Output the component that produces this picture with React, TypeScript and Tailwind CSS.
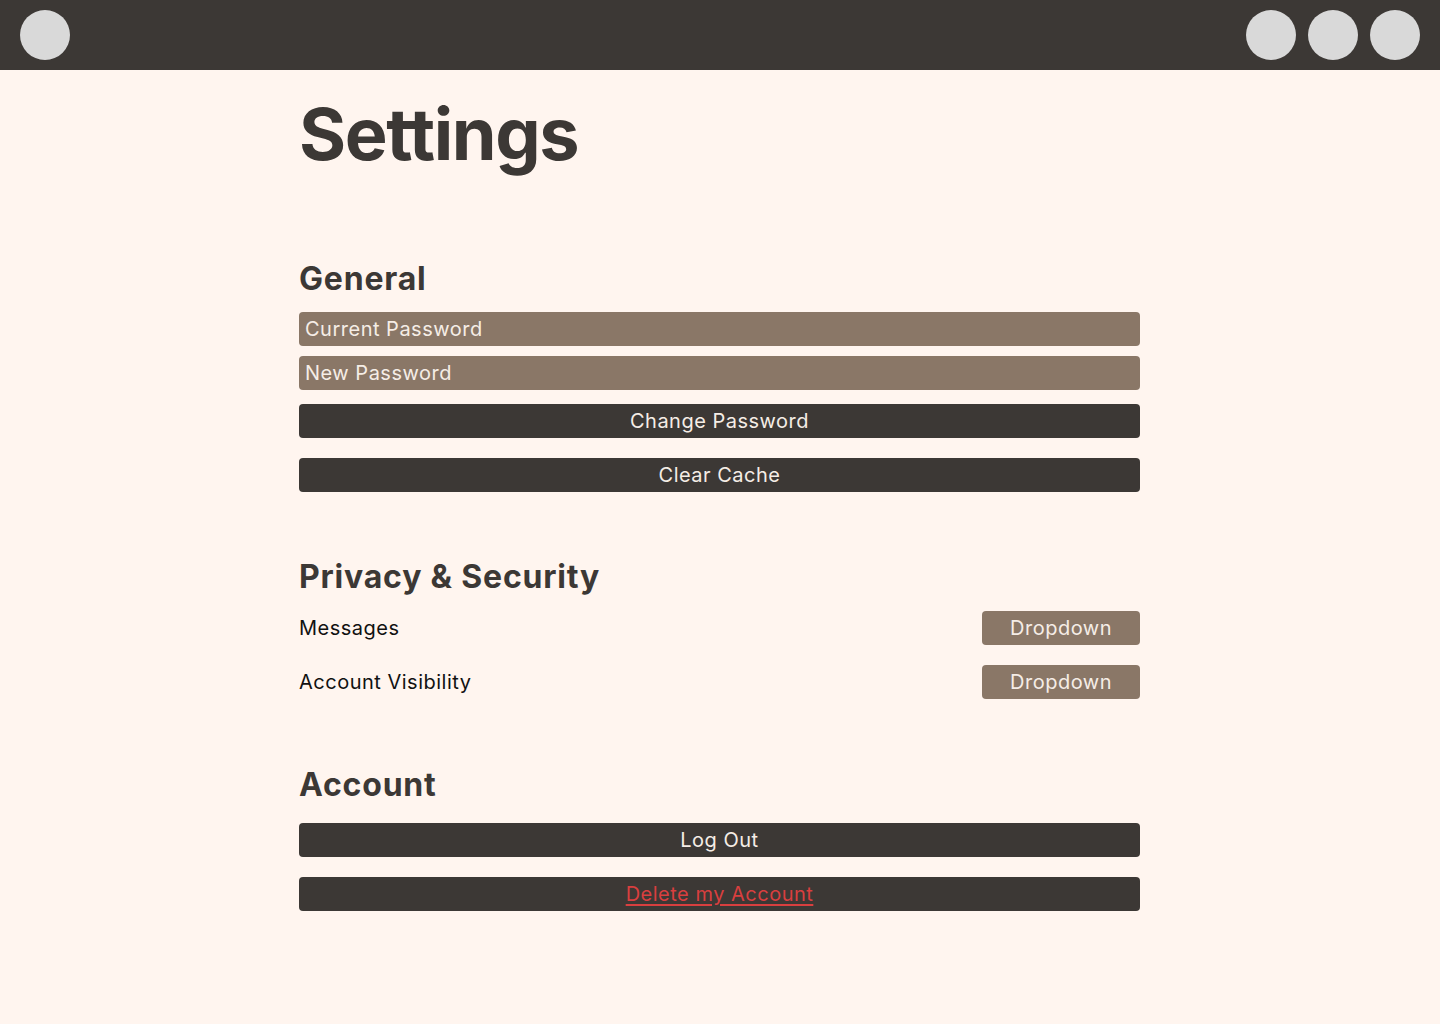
export default function App() {
  const font = { fontFamily: "Inter, 'Noto Sans', sans-serif" };
  return (
    <div className="min-h-[1024px] bg-[#fff5ef] text-[#3c3835]" style={font}>
      <header className="h-[70px] bg-[#3c3835] flex items-center justify-between px-5">
        <div className="w-[50px] h-[50px] rounded-full bg-[#d9d9d9]" />
        <div className="flex gap-3">
          <div className="w-[50px] h-[50px] rounded-full bg-[#d9d9d9]" />
          <div className="w-[50px] h-[50px] rounded-full bg-[#d9d9d9]" />
          <div className="w-[50px] h-[50px] rounded-full bg-[#d9d9d9]" />
        </div>
      </header>

      <main className="w-[841px] ml-[299px] tracking-[0.5px]">
        <h1 className="mt-[20px] text-[72px] leading-[88px] font-bold tracking-[-1.4px]">Settings</h1>

        <section className="mt-[81px]">
          <h2 className="text-[32px] leading-[40px] font-bold tracking-[0.8px]">General</h2>
          <div className="mt-[13px] flex flex-col gap-[10px]">
            <input
              placeholder="Current Password"
              className="h-[34px] rounded-[4px] bg-[#8a7767] px-[6px] text-[20px] text-[#f5ede6] placeholder:text-[#f5ede6] outline-none"
            />
            <input
              placeholder="New Password"
              className="h-[34px] rounded-[4px] bg-[#8a7767] px-[6px] text-[20px] text-[#f5ede6] placeholder:text-[#f5ede6] outline-none"
            />
          </div>
          <button className="mt-[14px] w-full h-[34px] rounded-[4px] bg-[#3c3835] text-[20px] text-[#f5ede6]">
            Change Password
          </button>
          <button className="mt-[20px] w-full h-[34px] rounded-[4px] bg-[#3c3835] text-[20px] text-[#f5ede6]">
            Clear Cache
          </button>
        </section>

        <section className="mt-[65px]">
          <h2 className="text-[32px] leading-[40px] font-bold tracking-[0.8px]">Privacy &amp; Security</h2>
          <div className="mt-[14px] flex flex-col gap-[20px]">
            <div className="flex items-center justify-between">
              <span className="text-[20px] text-[#111]">Messages</span>
              <button className="w-[158px] h-[34px] rounded-[4px] bg-[#8a7767] text-[20px] text-[#f5ede6]">
                Dropdown
              </button>
            </div>
            <div className="flex items-center justify-between">
              <span className="text-[20px] text-[#111]">Account Visibility</span>
              <button className="w-[158px] h-[34px] rounded-[4px] bg-[#8a7767] text-[20px] text-[#f5ede6]">
                Dropdown
              </button>
            </div>
          </div>
        </section>

        <section className="mt-[66px]">
          <h2 className="text-[32px] leading-[40px] font-bold tracking-[0.8px]">Account</h2>
          <button className="mt-[18px] w-full h-[34px] rounded-[4px] bg-[#3c3835] text-[20px] text-[#f5ede6]">
            Log Out
          </button>
          <button className="mt-[20px] w-full h-[34px] rounded-[4px] bg-[#3c3835] text-[20px] text-[#d93f3f] underline underline-offset-[3px]">
            Delete my Account
          </button>
        </section>
      </main>
    </div>
  );
}
